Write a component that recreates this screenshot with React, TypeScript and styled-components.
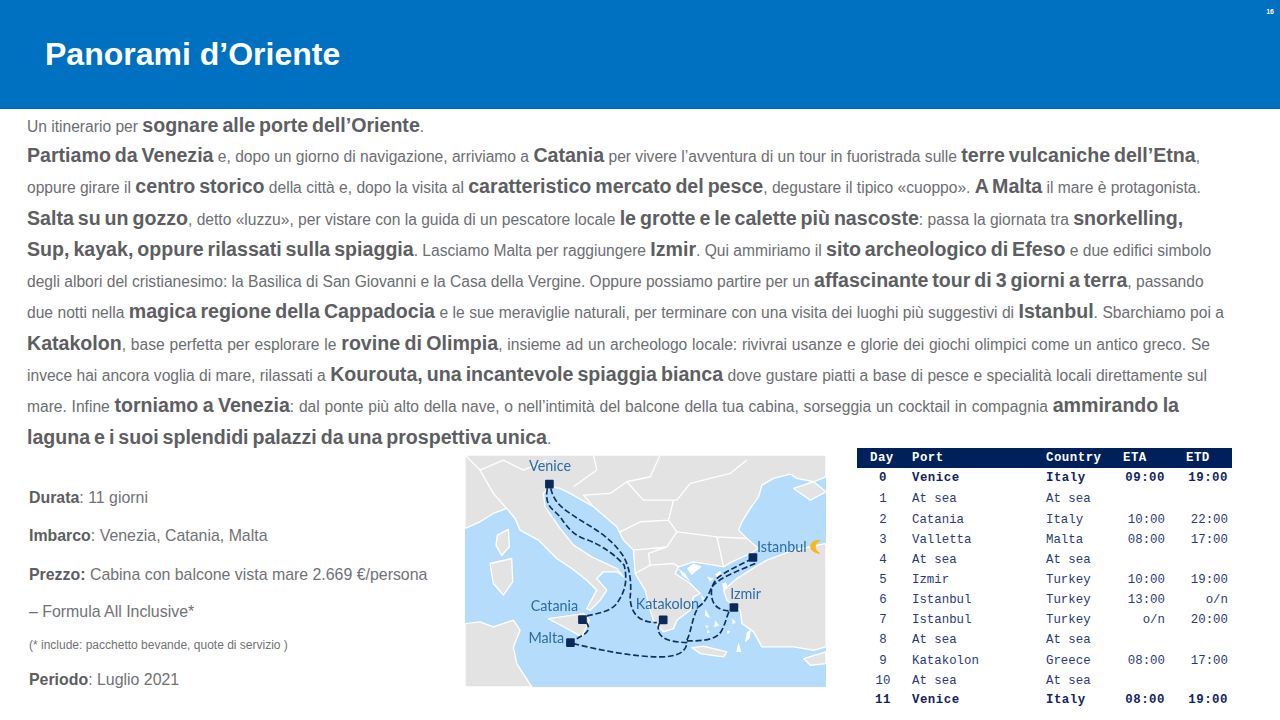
import React from "react";
import styled, { createGlobalStyle } from "styled-components";

const Global = createGlobalStyle`
  html, body { margin: 0; padding: 0; background: #fff; }
  body { font-family: "Liberation Sans", Arial, sans-serif; width: 1280px; height: 720px; overflow: hidden; }
`;

const Page = styled.div`
  width: 1280px;
  height: 720px;
  overflow: hidden;
  display: flex;
  flex-direction: column;
`;
const Header = styled.header`
  height: 109px;
  flex: none;
  box-sizing: border-box;
  background: #0070c0;
  border-bottom: 1px solid #0067b0;
  display: flex;
  justify-content: space-between;
  padding: 0 6px 0 45px;
`;
const Title = styled.h1`
  margin: 0;
  align-self: center;
  font-size: 32px;
  font-weight: 700;
  color: #fff;
  line-height: 36px;
`;
const PageNo = styled.span`
  font-size: 7px;
  font-weight: 700;
  color: #fff;
  line-height: 8px;
  padding-top: 8px;
`;
const Story = styled.section`
  height: 339px;
  flex: none;
  padding: 1px 0 0 27px;
  box-sizing: border-box;
`;
const Line = styled.p<{ $w: number; $tight?: boolean }>`
  margin: 0;
  width: ${(p) => p.$w}px;
  height: ${(p) => (p.$tight ? 30 : 31.3)}px;
  line-height: ${(p) => (p.$tight ? 30 : 31.3)}px;
  font-size: 15.6px;
  color: #6b6e72;
  text-align: justify;
  text-align-last: justify;
  white-space: nowrap;
`;
const B = styled.b`
  font-size: 19.6px;
  font-weight: 700;
  color: #5c5e62;
  word-spacing: -1.5px;
`;
const Bottom = styled.section`
  flex: 1;
  display: flex;
  align-items: flex-start;
`;
const Facts = styled.div`
  width: 465px;
  flex: none;
  padding: 31px 0 0 29px;
  box-sizing: border-box;
  color: #707276;
`;
const Fact = styled.p<{ $h: number; $small?: boolean }>`
  margin: 0;
  height: ${(p) => p.$h}px;
  line-height: ${(p) => p.$h}px;
  font-size: ${(p) => (p.$small ? 12 : 15.9)}px;
  white-space: nowrap;
`;
const FB = styled.b`
  color: #5c5e62;
`;
const MapFrame = styled.svg`
  width: 361px;
  height: 232px;
  flex: none;
  margin-top: 7px;
  display: block;
  filter: blur(0.35px);
`;
const Itinerary = styled.div`
  width: 375px;
  flex: none;
  margin-left: 31px;
  font-family: "Liberation Mono", "Courier New", monospace;
  font-size: 12.4px;
`;
const Row = styled.div<{ $head?: boolean; $bold?: boolean; $h: number }>`
  display: grid;
  grid-template-columns: 52px 137px 71px 48px 67px;
  height: ${(p) => p.$h}px;
  line-height: ${(p) => p.$h}px;
  white-space: nowrap;
  background: ${(p) => (p.$head ? "#00205b" : "transparent")};
  color: ${(p) => (p.$head ? "#fff" : p.$bold ? "#12245f" : "#2a3a78")};
  font-weight: ${(p) => (p.$bold ? 700 : 400)};
  letter-spacing: ${(p) => (p.$bold ? 0.5 : 0)}px;
`;
const Cell = styled.span<{ $align?: string; $pad?: number }>`
  text-align: ${(p) => p.$align || "left"};
  padding: 0 ${(p) => p.$pad || 0}px;
`;

const boldLines: [string, boolean][][] = [
  [["Un itinerario per ", false], ["sognare alle porte dell’Oriente", true], [".", false]],
  [["Partiamo da Venezia", true], [" e, dopo un giorno di navigazione, arriviamo a ", false], ["Catania", true], [" per vivere l’avventura di un tour in fuoristrada sulle ", false], ["terre vulcaniche dell’Etna", true], [",", false]],
  [["oppure girare il ", false], ["centro storico", true], [" della città e, dopo la visita al ", false], ["caratteristico mercato del pesce", true], [", degustare il tipico «cuoppo». ", false], ["A Malta", true], [" il mare è protagonista.", false]],
  [["Salta su un gozzo", true], [", detto «luzzu», per vistare con la guida di un pescatore locale ", false], ["le grotte e le calette più nascoste", true], [": passa la giornata tra ", false], ["snorkelling,", true]],
  [["Sup, kayak, oppure rilassati sulla spiaggia", true], [". Lasciamo Malta per raggiungere ", false], ["Izmir", true], [". Qui ammiriamo il ", false], ["sito archeologico di Efeso", true], [" e due edifici simbolo", false]],
  [["degli albori del cristianesimo: la Basilica di San Giovanni e la Casa della Vergine. Oppure possiamo partire per un ", false], ["affascinante tour di 3 giorni a terra", true], [", passando", false]],
  [["due notti nella ", false], ["magica regione della Cappadocia", true], [" e le sue meraviglie naturali, per terminare con una visita dei luoghi più suggestivi di ", false], ["Istanbul", true], [". Sbarchiamo poi a", false]],
  [["Katakolon", true], [", base perfetta per esplorare le ", false], ["rovine di Olimpia", true], [", insieme ad un archeologo locale: rivivrai usanze e glorie dei giochi olimpici come un antico greco. Se", false]],
  [["invece hai ancora voglia di mare, rilassati a ", false], ["Kourouta, una incantevole spiaggia bianca", true], [" dove gustare piatti a base di pesce e specialità locali direttamente sul", false]],
  [["mare. Infine ", false], ["torniamo a Venezia", true], [": dal ponte più alto della nave, o nell’intimità del balcone della tua cabina, sorseggia un cocktail in compagnia ", false], ["ammirando la", true]],
  [["laguna e i suoi splendidi palazzi da una prospettiva unica", true], [".", false]],
];
const widths = [391, 1172, 1171, 1156, 1146, 1174, 1197, 1183, 1180, 1152, 513];

const rows = [
  ["0", "Venice", "Italy", "09:00", "19:00", 1, 21],
  ["1", "At sea", "At sea", "", "", 0, 21],
  ["2", "Catania", "Italy", "10:00", "22:00", 0, 21],
  ["3", "Valletta", "Malta", "08:00", "17:00", 0, 19],
  ["4", "At sea", "At sea", "", "", 0, 20],
  ["5", "Izmir", "Turkey", "10:00", "19:00", 0, 20],
  ["6", "Istanbul", "Turkey", "13:00", "o/n", 0, 20],
  ["7", "Istanbul", "Turkey", "o/n", "20:00", 0, 20],
  ["8", "At sea", "At sea", "", "", 0, 21],
  ["9", "Katakolon", "Greece", "08:00", "17:00", 0, 20],
  ["10", "At sea", "At sea", "", "", 0, 20],
  ["11", "Venice", "Italy", "08:00", "19:00", 1, 19],
] as const;

function RouteMap() {
  const routes = [
    "M262 115C255 150 265 170 285 185C310 205 320 245 370 265C430 285 470 320 492 345C505 400 490 430 470 460C450 485 410 490 375 498",
    "M272 115C280 150 300 170 330 190C380 225 440 250 480 305C510 340 515 400 510 440C510 480 530 518 590 517",
    "M378 515C395 540 380 550 345 568",
    "M340 580C420 600 520 620 600 620C650 620 680 605 680 575",
    "M597 520C585 555 610 575 680 577",
    "M680 572C720 572 770 572 785 540C800 510 800 490 810 480",
    "M680 570C695 540 695 500 715 470C745 450 750 410 770 385C800 360 840 345 870 328",
    "M885 340C840 360 780 380 755 410C750 440 755 480 805 482",
  ];
  const ports: [number, number][] = [[268, 102], [878, 322], [821, 472], [609, 509], [367, 508], [331, 577]];
  const labels: [string, number, number][] = [
    ["Venice", 207, 62], ["Istanbul", 890, 306], ["Izmir", 810, 446],
    ["Katakolon", 527, 476], ["Catania", 212, 482], ["Malta", 205, 578],
  ];
  const islands = [
    "M700 340l25 10-20 15-10 10-15-20z", "M740 380l20 5-10 10z", "M765 372l15-10 5 15-12 12z",
    "M722 432l12 14-8 6z", "M735 475l15 30-15-8z", "M765 510l12 16-16 4z", "M735 525l12 2-8 8z",
    "M742 538l8 8-10 2z", "M800 540l10 4-8 8z", "M815 505l12 10-10 8z", "M785 400l12-4 6 18-12 6z",
    "M835 575l8 30-15 0z", "M860 545l12-5-4 25-14 12z", "M655 355l20 15 15 25-25-20z",
  ];
  return (
    <MapFrame viewBox="15 15 1082 695" role="img" aria-label="Route map">
      <rect x="15" y="15" width="1082" height="695" fill="#b5dcfb" />
      <g fill="#e3e3e3" stroke="#fff" strokeWidth="4" strokeLinejoin="round">
        <path d="M15 15H1097V80L1060 95L1010 85L990 72L940 85L905 105L895 140L870 175L845 215L835 240L860 265L895 295L870 310L815 335L790 350L760 345L700 335L655 350L645 370L690 400L720 430L700 440L690 480L650 510L640 535L610 545L580 510L570 480L555 420L525 370L520 300L490 270L470 230L400 170L330 130L300 115L270 110L250 130L255 170L300 235L340 285L395 320L470 355L490 380L470 365L430 365L410 385L440 420L420 450L390 480L380 475L410 420L380 390L335 355L290 325L235 270L180 240L165 205L140 175L100 190L60 215L15 235Z" />
        <path d="M1097 280L1000 300L920 330L885 350L830 385L790 420L800 450L840 480L845 520L880 545L905 590L1000 590L1060 600L1097 590Z" />
        <path d="M265 505L370 490L388 510L365 560L330 540Z" />
        <path d="M15 520L60 515L100 530L160 510L180 540L160 590L170 640L215 710H15Z" />
        <path d="M112 255L145 238L148 290L125 316L108 285Z" />
        <path d="M90 340L155 325L158 395L130 435L100 400Z" />
        <path d="M695 592L730 588L800 605L790 620L720 610Z" />
        <path d="M1030 625L1097 605V640L1050 645Z" />
        <path d="M1000 115L1060 95L1097 125L1050 150Z" />
        <path d="M15 15L60 60L130 30L190 60L260 30M400 15L410 60L340 110M600 15L570 80L500 95L550 150L650 150L690 100L810 70L860 30M500 95L450 130L370 135L400 170M640 150L625 210L650 245L620 290L520 300M625 210L540 215L480 245M620 290L565 310L570 345L640 340L655 350M860 265L770 260L650 245M770 260L790 350M60 60L100 130L140 175M570 345L525 370" fill="none" />
      </g>
      <g fill="#fff">
        {islands.map((d) => (
          <path key={d} d={d} />
        ))}
      </g>
      <g fill="none" stroke="#10305f" strokeWidth="5" strokeDasharray="18 8" strokeLinecap="butt">
        {routes.map((d) => (
          <path key={d} d={d} />
        ))}
      </g>
      {ports.map(([x, y]) => (
        <rect key={x} x={x - 13} y={y - 13} width="26" height="26" rx="3" fill="#0b2a5a" />
      ))}
      <g fill="#2b6ca8" fontFamily="Lato, sans-serif" fontSize="43">
        {labels.map(([t, x, y]) => (
          <text key={t} x={x} y={y}>{t}</text>
        ))}
      </g>
      <path d="M1078 271C1050 268 1035 302 1078 310C1062 300 1058 282 1078 271Z" fill="#f9b71f" stroke="#f9b71f" strokeWidth="3" />
    </MapFrame>
  );
}

export default function App() {
  return (
    <Page>
      <Global />
      <Header>
        <Title>Panorami d’Oriente</Title>
        <PageNo>16</PageNo>
      </Header>
      <Story>
        {boldLines.map((parts, i) => (
          <Line key={i} $w={widths[i]} $tight={i === 0}>
            {parts.map(([t, b], j) => (b ? <B key={j}>{t}</B> : <React.Fragment key={j}>{t}</React.Fragment>))}
          </Line>
        ))}
      </Story>
      <Bottom>
        <Facts>
          <Fact $h={38}><FB>Durata</FB>: 11 giorni</Fact>
          <Fact $h={38}><FB>Imbarco</FB>: Venezia, Catania, Malta</Fact>
          <Fact $h={39}><FB>Prezzo:</FB> Cabina con balcone vista mare 2.669 €/persona</Fact>
          <Fact $h={36}>– Formula All Inclusive*</Fact>
          <Fact $h={30} $small>(* include: pacchetto bevande, quote di servizio )</Fact>
          <Fact $h={40}><FB>Periodo</FB>: Luglio 2021</Fact>
        </Facts>
        <RouteMap />
        <Itinerary>
          <Row $head $bold $h={20}>
            <Cell $pad={13}>Day</Cell>
            <Cell $pad={3}>Port</Cell>
            <Cell>Country</Cell>
            <Cell $pad={6}>ETA</Cell>
            <Cell $pad={21}>ETD</Cell>
          </Row>
          {rows.map(([d, port, country, eta, etd, bold, h]) => (
            <Row key={d} $bold={!!bold} $h={h}>
              <Cell $align="center">{d}</Cell>
              <Cell $pad={3}>{port}</Cell>
              <Cell>{country}</Cell>
              <Cell $align="right">{eta}</Cell>
              <Cell $align="right" $pad={4}>{etd}</Cell>
            </Row>
          ))}
        </Itinerary>
      </Bottom>
    </Page>
  );
}
